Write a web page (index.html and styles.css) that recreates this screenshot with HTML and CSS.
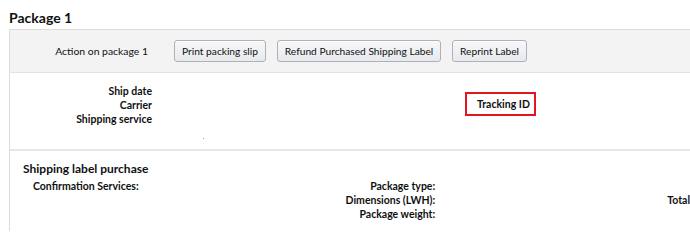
FILE: index.html
```html
<!DOCTYPE html>
<html lang="en">
<head>
<meta charset="utf-8">
<title>Package 1</title>
<link rel="stylesheet" href="styles.css">
</head>
<body>
<div class="page">
  <h2 class="pkg-title">Package 1</h2>
  <div class="panel">
    <div class="actions">
      <div class="actions-label">Action on package 1</div>
      <div class="btns">
        <button class="btn btn-slip">Print packing slip</button>
        <button class="btn btn-refund">Refund Purchased Shipping Label</button>
        <button class="btn btn-reprint">Reprint Label</button>
      </div>
    </div>
    <div class="ship">
      <div class="ship-row">
        <div class="ship-labels">
          <div>Ship date</div>
          <div>Carrier</div>
          <div>Shipping service</div>
        </div>
        <div class="tracking">Tracking ID</div>
      </div>
      <div class="dot"></div>
    </div>
    <div class="purchase">
      <h3 class="purchase-title">Shipping label purchase</h3>
      <div class="purchase-body">
        <div class="col-confirm">Confirmation Services:</div>
        <div class="col-pkg">
          <div>Package type:</div>
          <div>Dimensions (LWH):</div>
          <div>Package weight:</div>
        </div>
        <div class="col-total">Total</div>
      </div>
    </div>
  </div>
</div>
</body>
</html>
```

FILE: styles.css
```css
html, body {
  margin: 0;
  padding: 0;
  background: #fff;
  overflow: hidden;
}
body {
  font-family: Lato, Roboto, Arial, sans-serif;
  color: #0f1111;
  font-size: 10px;
}
.page {
  width: 690px;
  height: 231px;
  overflow: hidden;
}
.pkg-title {
  margin: 10px 0 3px 9px;
  font-size: 14px;
  line-height: 16px;
  font-weight: 700;
}
.panel {
  margin-left: 9px;
  width: 681px;
  box-sizing: border-box;
  border: 1px solid #dcdcdc;
  border-right: none;
  border-bottom: none;
}
.actions {
  display: flex;
  background: #f3f3f3;
  border-bottom: 1px solid #e3e3e3;
  padding: 10px 0 10px 0;
}
.actions-label {
  width: 138px;
  text-align: right;
  padding-top: 4px;
  line-height: 14px;
  font-size: 10.4px;
  margin-right: 26px;
}
.btns {
  display: flex;
  gap: 11px;
}
.btn {
  margin: 0;
  font-family: inherit;
  font-size: 10.2px;
  color: #0f1111;
  height: 22px;
  padding: 0;
  text-align: center;
  white-space: nowrap;
  border: 1px solid #adb1b8;
  border-radius: 3px;
  background: linear-gradient(#f7f8fa, #e7e9ec);
  box-shadow: inset 0 1px 0 rgba(255,255,255,.6);
}
.btn-slip { width: 92px; }
.btn-refund { width: 164px; }
.btn-reprint { width: 75px; }
.ship {
  padding: 11px 0 10px 0;
  border-bottom: 2px solid #e7e7e7;
}
.ship-row {
  display: flex;
  align-items: flex-start;
}
.ship-labels {
  width: 142px;
  text-align: right;
  font-weight: 700;
  font-size: 10.5px;
  line-height: 14px;
}
.tracking {
  margin-left: 313px;
  margin-top: 8px;
  width: 71px;
  height: 24px;
  box-sizing: border-box;
  border: 2px solid #e4151f;
  padding-left: 10px;
  font-weight: 700;
  font-size: 10.5px;
  line-height: 20px;
}
.dot {
  width: 1px;
  height: 1px;
  background: #9a9a9a;
  margin: 12px 0 0 193px;
}
.purchase {
  padding: 10px 0 40px 13px;
}
.purchase-title {
  margin: 0;
  font-size: 12px;
  line-height: 16px;
  font-weight: 700;
}
.purchase-body {
  display: flex;
  margin-top: 2px;
  margin-left: 10px;
  font-weight: 700;
  font-size: 10.5px;
  line-height: 14px;
}
.col-confirm {
  width: 220px;
}
.col-pkg {
  width: 183px;
  text-align: right;
}
.col-total {
  margin-left: 232px;
  padding-top: 14px;
  white-space: nowrap;
}
```
